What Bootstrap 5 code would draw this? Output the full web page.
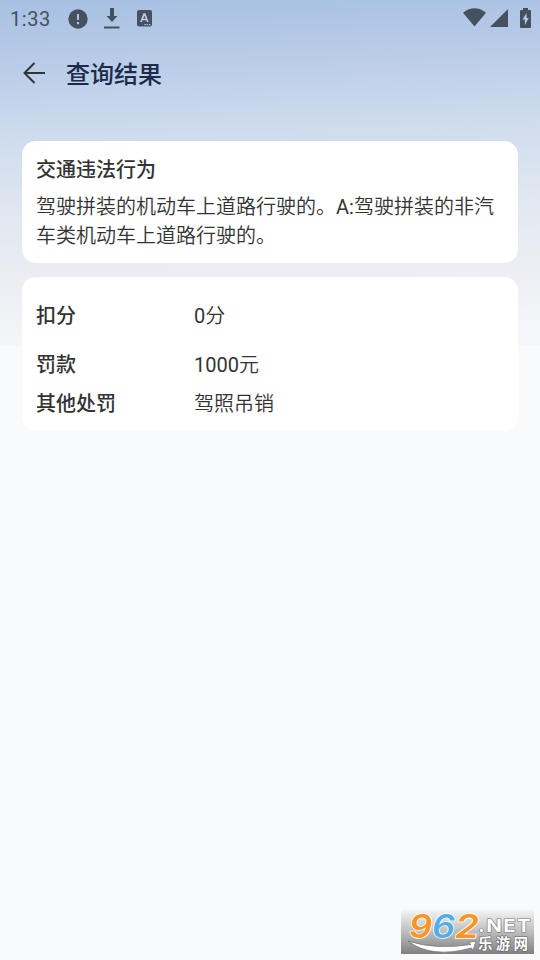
<!DOCTYPE html>
<html lang="zh-CN">
<head>
<meta charset="utf-8">
<meta name="viewport" content="width=device-width, initial-scale=1">
<title>查询结果</title>
<link href="https://cdn.jsdelivr.net/npm/bootstrap@5.3.0/dist/css/bootstrap.min.css" rel="stylesheet">
<style>
  body { font-family: Roboto, "Noto Sans CJK SC", sans-serif; color: #333; background: #f9fafc; font-size: 20px; line-height: 29px; }
  .screen { height: 960px; background: linear-gradient(178deg, #a7c0e2 0, #bacde8 70px, #cfdced 140px, #e1e8f1 220px, #ecedf3 280px, #f5f6f9 346px) 0 0 / 100% 346px no-repeat #f9fafc; }
  .status-bar { height: 37px; padding: 0 9px 0 10px; color: #46515f; }
  .clock { font-size: 20px; letter-spacing: .55px; width: 58px; padding-top: 1px; }
  .download-icon { margin-left: 16px; }
  .input-icon { margin-left: 17px; }
  .battery-icon { margin-left: 12px; }
  .signals { padding-bottom: 2px; }
  .app-bar { height: 72px; padding-left: 22px; }
  .app-title { font-size: 24px; font-weight: 500; line-height: 36px; color: #1d2b49; margin-left: 20px; padding-top: 4px; }
  .panels { padding: 32px 22px 0; gap: 14px; }
  .panel { border-radius: 14px; padding: 0 14px; }
  .panel-text { height: 122px; padding-top: 15px; }
  .panel-rows { height: 154px; padding-top: 25px; }
  .caption { font-weight: 500; }
  .value { font-weight: 350; }
  .latin { font-weight: 400; }
  .label-col { width: 158px; }
  .row-a { height: 49px; }
  .row-b { height: 39px; }
  .brand { right: 6px; bottom: 6px; width: 133px; height: 44px; }
</style>
</head>
<body>
<main class="screen position-relative overflow-hidden">
  <div class="status-bar d-flex align-items-center">
    <span class="clock">1:33</span>
    <svg width="20" height="20" viewBox="0 0 20 20"><circle cx="10" cy="10" r="9.7" fill="#46515f"/><path d="M10 5v6M10 13v2.2" stroke="#b1c6e4" stroke-width="2"/></svg>
    <svg class="download-icon" width="16" height="21" viewBox="0 0 16 21"><path d="M6 0h4v8h3.500L8 14 2.500 8H6zM0 18.500h15.500v2H0z" fill="#46515f"/></svg>
    <svg class="input-icon" width="15" height="17" viewBox="0 0 15 17"><rect width="15" height="16.500" rx="2" fill="#46515f"/><path d="M4 12 7 4.200h.8L10.800 12M5.200 9.500h4.500" fill="none" stroke="#b8cbe7" stroke-width="1.700"/><path d="M7.500 14.600h6" stroke="#b8cbe7" stroke-width="1.200" stroke-dasharray="1.300 1"/></svg>
    <div class="signals ms-auto d-flex align-items-center">
      <svg width="23" height="19" viewBox="0 0 23 19"><path d="M0 4.700Q11.500-4 23 4.700L11.500 18.500Z" fill="#46515f"/></svg>
      <svg class="ms-1" width="18" height="18" viewBox="0 0 18 18"><path d="M18 0v18H0z" fill="#46515f"/></svg>
      <svg class="battery-icon" width="11" height="20" viewBox="0 0 11 20"><path d="M3 0h5v2h2q1 0 1 1v16q0 1-1 1H1q-1 0-1-1V3q0-1 1-1h2z" fill="#46515f"/><path d="M6.600 5 2.500 11.500h2.400V17L8.700 10H6.500z" fill="#b8cbe7"/></svg>
    </div>
  </div>
  <header class="app-bar d-flex align-items-center">
    <svg width="24" height="22" viewBox="0 0 24 22"><path d="M23 11H2.500M12.500 1 2.500 11l10 10" fill="none" stroke="#333" stroke-width="2"/></svg>
    <h1 class="app-title mb-0">查询结果</h1>
  </header>
  <div class="panels d-flex flex-column">
    <section class="panel panel-text bg-white">
      <div class="caption mb-2">交通违法行为</div>
      <div class="value">驾驶拼装的机动车上道路行驶的。<span class="latin">A:</span>驾驶拼装的非汽车类机动车上道路行驶的。</div>
    </section>
    <section class="panel panel-rows bg-white">
      <div class="row-a d-flex"><div class="label-col caption">扣分</div><div class="value"><span class="latin">0</span>分</div></div>
      <div class="row-b d-flex"><div class="label-col caption">罚款</div><div class="value"><span class="latin">1000</span>元</div></div>
      <div class="d-flex"><div class="label-col caption">其他处罚</div><div class="value">驾照吊销</div></div>
    </section>
  </div>
  <svg class="brand position-absolute" viewBox="0 0 133 44">
    <defs>
      <linearGradient id="plate" x2="0" y2="1"><stop stop-color="#f4f4f4"/><stop offset=".5" stop-color="#bdbdbd"/><stop offset="1" stop-color="#808080"/></linearGradient>
    </defs>
    <rect width="133" height="44" fill="url(#plate)"/>
    <path d="M7 31Q34 40 70 34.500L67 32.500 75 31 72 40.500 70.500 38Q30 49 7 31Z" fill="#fff" stroke="#777" stroke-width=".8"/>
    <g font-family="Inter, sans-serif" font-style="italic" font-weight="600" font-size="32" stroke-width="1.500" paint-order="stroke" stroke="#fff">
      <text x="8" y="28" textLength="23" lengthAdjust="spacingAndGlyphs" fill="#f79527">9</text>
      <text x="31" y="28" textLength="23" lengthAdjust="spacingAndGlyphs" fill="#55aee3">6</text>
      <text x="54" y="28" textLength="24" lengthAdjust="spacingAndGlyphs" fill="#f79527">2</text>
    </g>
    <text x="77" y="21.500" textLength="54" lengthAdjust="spacingAndGlyphs" font-family="Inter, sans-serif" font-weight="700" font-size="18" letter-spacing="1.200" fill="#fff" stroke="#777" stroke-width="1.200" paint-order="stroke">.NET</text>
    <text x="77" y="39" textLength="50" font-family="Noto Sans CJK SC, sans-serif" font-weight="700" font-size="14.500" fill="#fff" stroke="#666" stroke-width="1.200" paint-order="stroke">乐游网</text>
  </svg>
</main>
<script src="https://cdn.jsdelivr.net/npm/bootstrap@5.3.0/dist/js/bootstrap.bundle.min.js"></script>
</body>
</html>
